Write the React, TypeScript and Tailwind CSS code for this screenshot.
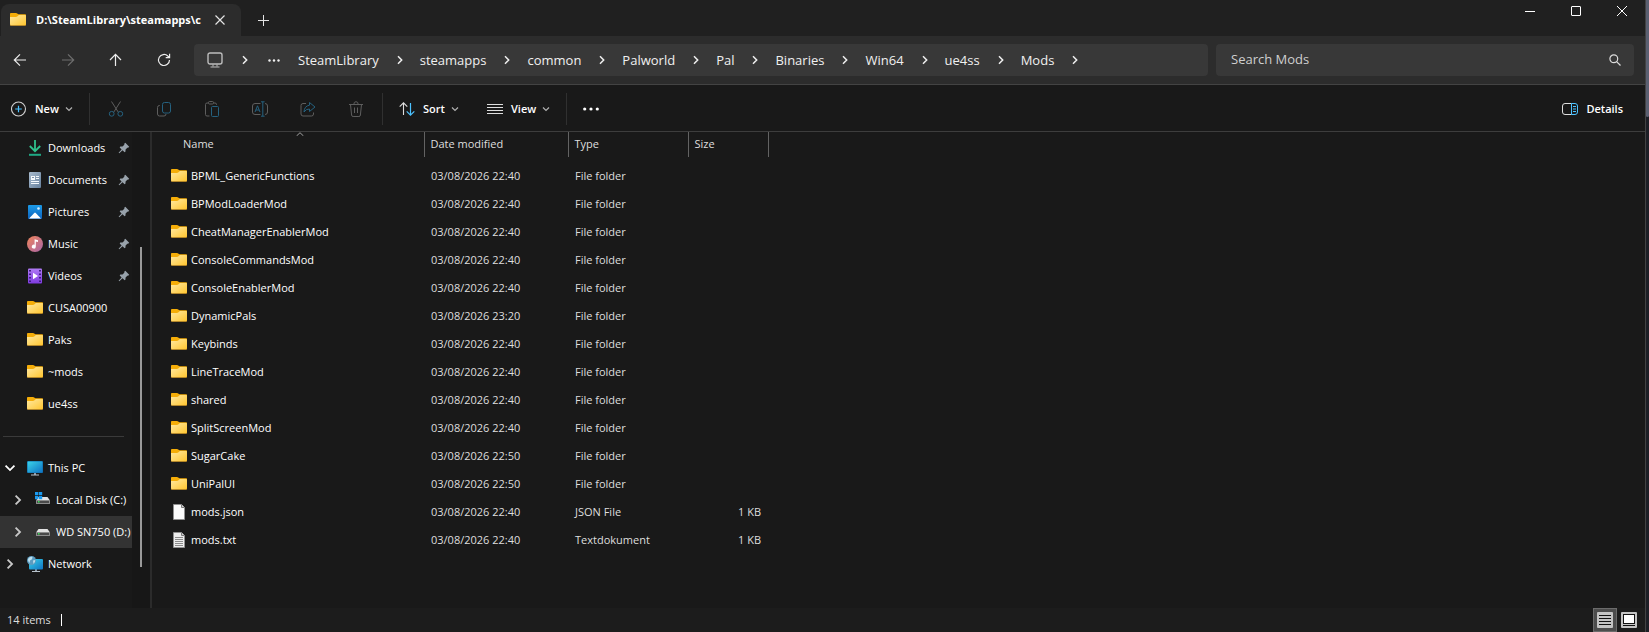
import React from 'react'

type IconProps = { className?: string }

type FileKind = 'folder' | 'json' | 'txt'

interface FileRow {
  name: string
  modified: string
  type: string
  size?: string
  kind: FileKind
}

const crumbs = ['SteamLibrary', 'steamapps', 'common', 'Palworld', 'Pal', 'Binaries', 'Win64', 'ue4ss', 'Mods']

const folder = (name: string, time = '22:40'): FileRow => ({
  name,
  modified: `03/08/2026 ${time}`,
  type: 'File folder',
  kind: 'folder'
})

const files: FileRow[] = [
  folder('BPML_GenericFunctions'),
  folder('BPModLoaderMod'),
  folder('CheatManagerEnablerMod'),
  folder('ConsoleCommandsMod'),
  folder('ConsoleEnablerMod'),
  folder('DynamicPals', '23:20'),
  folder('Keybinds'),
  folder('LineTraceMod'),
  folder('shared'),
  folder('SplitScreenMod'),
  folder('SugarCake', '22:50'),
  folder('UniPalUI', '22:50'),
  { name: 'mods.json', modified: '03/08/2026 22:40', type: 'JSON File', size: '1 KB', kind: 'json' },
  { name: 'mods.txt', modified: '03/08/2026 22:40', type: 'Textdokument', size: '1 KB', kind: 'txt' }
]

const FolderIcon: React.FC = () => (
  <svg className="h-4 w-4 shrink-0" viewBox="0 0 16 16" aria-hidden="true">
    <path d="M0 2C0 1.300.4.900 1 .900h5c.5 0 .9.200 1.200.500L8.400 2.200H15c.6 0 1 .4 1 1V8H0z" fill="#f5ad08" />
    <path d="M0 5h6c.5 0 .9-.1 1.200-.4l1.200-1.200c.2-.3.5-.4.8-.4H15c.6 0 1 .4 1 1v8.600c0 .6-.4 1-1 1H1c-.6 0-1-.4-1-1z" fill="url(#folderFront)" />
    <path d="M0 12.300c0 .7.4 1.300 1 1.300h14c.6 0 1-.6 1-1.300-.1.400-.5.600-1 .600H1c-.5 0-.9-.2-1-.6z" fill="#dc9a20" />
  </svg>
)

const DownloadsIcon: React.FC = () => (
  <svg className="h-4 w-4 shrink-0" viewBox="0 0 16 16" fill="none" aria-hidden="true">
    <path d="M8 0v11M2.800 6 8 11.200 13.200 6" stroke="#2fc08c" strokeWidth="1.800" />
    <path d="M2 14.800h12" stroke="#1fa884" strokeWidth="2" />
  </svg>
)

const DocumentsIcon: React.FC = () => (
  <svg className="h-4 w-4 shrink-0" viewBox="0 0 16 16" aria-hidden="true">
    <rect x="2" y="0" width="12" height="16" rx="1" fill="url(#docFill)" />
    <path d="M4 4h4v4H4zM9 4h3v1H9zM9 6h3v1H9zM4 9h8v1H4zM4 11h8v1H4z" fill="#f4f8fc" />
    <path d="M5 5h2v1H5z" fill="#7f93aa" />
  </svg>
)

const PicturesIcon: React.FC = () => (
  <svg className="h-4 w-4 shrink-0" viewBox="0 0 16 16" aria-hidden="true">
    <rect x="1" y="1" width="14" height="14" rx="1" fill="url(#picFill)" />
    <path d="M2 14.500 7.300 8.900q.7-.7 1.400 0L14 14.500z" fill="#fff" />
    <circle cx="11.500" cy="4.500" r="1.300" fill="#d7f0ff" />
  </svg>
)

const MusicIcon: React.FC = () => (
  <svg className="h-4 w-4 shrink-0" viewBox="0 0 16 16" aria-hidden="true">
    <circle cx="8" cy="8" r="8" fill="url(#musicFill)" />
    <path d="M7.600 3.200 11 4.200v1.900L8.800 5.500v5.200a2 2 0 1 1-1.200-1.900z" fill="#fff" />
  </svg>
)

const VideosIcon: React.FC = () => (
  <svg className="h-4 w-4 shrink-0" viewBox="0 0 16 16" aria-hidden="true">
    <rect x="1" y="0.500" width="14" height="15" rx="1" fill="url(#videoFill)" />
    <path d="M2 2h2v1.600H2zM2 5.400h2V7H2zM2 9h2v1.600H2zM2 12.400h2V14H2zM12 2h2v1.600h-2zM12 5.400h2V7h-2zM12 9h2v1.600h-2zM12 12.400h2V14h-2z" fill="#3f1f80" />
    <path d="M6 4.800v6.400L11 8z" fill="#fff" />
  </svg>
)

const PcIcon: React.FC = () => (
  <svg className="h-4 w-4 shrink-0" viewBox="0 0 16 16" aria-hidden="true">
    <path d="M7 12h2v3H7z" fill="#8b98a5" />
    <rect x="0" y="1" width="16" height="12" rx="1" fill="#0f6cab" />
    <rect x="0.600" y="1.600" width="14.800" height="10.800" rx="0.500" fill="url(#screenFill)" />
    <path d="M4 14.500h8v1H4z" fill="#b8c3cc" />
  </svg>
)

const NetworkIcon: React.FC = () => (
  <svg className="h-4 w-4 shrink-0" viewBox="0 0 16 16" aria-hidden="true">
    <path d="M8 12h2v3H8z" fill="#8b98a5" />
    <rect x="2" y="3" width="14" height="10.500" rx="1" fill="url(#screenFill)" />
    <path d="M5 15h8v1H5z" fill="#b8c3cc" />
    <circle cx="4.500" cy="4.500" r="4.500" fill="#5d9cc0" />
    <path d="M1 3Q3 .2 5.500 1L5 3.200 3 4.500 2.500 7Q.7 5.500 1 3zM6 4.500l2.300-.5Q8.300 6.500 6.500 8z" fill="#bfe0ee" />
  </svg>
)

const DriveShape: React.FC = () => (
  <>
    <path d="M3.500 7h9L15 10.500H1z" fill="#e3e3e3" />
    <rect x="1" y="10" width="14" height="4" rx="0.600" fill="#8d8d8d" />
    <rect x="2" y="11" width="12" height="2" fill="#4a4a4a" />
    <rect x="3" y="11" width="1.500" height="1.500" fill="#39e05a" />
  </>
)

const LocalDiskIcon: React.FC = () => (
  <svg className="h-4 w-4 shrink-0" viewBox="0 0 16 16" aria-hidden="true">
    <g transform="translate(0 -2)">
      <DriveShape />
    </g>
    <path d="M0 0h3.300v3.300H0zM3.900 0h3.300v3.300H3.900zM0 3.900h3.300v3.300H0zM3.900 3.900h3.300v3.300H3.900z" fill="#1a9af0" />
  </svg>
)

const DriveIcon: React.FC = () => (
  <svg className="h-4 w-4 shrink-0" viewBox="0 0 16 16" aria-hidden="true">
    <g transform="translate(0 -2)">
      <DriveShape />
    </g>
  </svg>
)

const FileIcon: React.FC<{ lined?: boolean }> = ({ lined }) => (
  <svg className="h-4 w-4 shrink-0" viewBox="0 0 16 16" aria-hidden="true">
    <path d="M2.500.5h8l3 3v12h-11z" fill={lined ? '#ececec' : '#fafafa'} stroke="#8f8f8f" />
    <path d="M10.500.5v3h3" fill="#cfcfcf" stroke="#7c7c7c" />
    {lined && <path d="M4 5.500h8M4 7.500h8M4 9.500h8M4 11.500h8M4 13.500h8" stroke="#8a8a8a" />}
  </svg>
)

const PinIcon: React.FC = () => (
  <svg className="h-3 w-3 shrink-0" viewBox="0 0 12 12" aria-hidden="true">
    <path d="M7.300.8 11.200 4.700 10.500 5.600 9.300 5.700 7.600 7.600 7.400 9.800 6.600 10.300 4.500 8.200 1.300 11.200.6 10.700 3.600 7.400 1.700 5.400 2.300 4.600 4.500 4.400 6.300 2.700 6.400 1.400z" fill="#98a2ab" />
  </svg>
)

const Chevron: React.FC<IconProps> = ({ className = '' }) => (
  <svg className={`shrink-0 ${className}`} viewBox="0 0 10 10" fill="none" stroke="currentColor" strokeWidth="1.500" aria-hidden="true">
    <path d="M3 1.300 6.700 5 3 8.700" />
  </svg>
)

const DownChevron: React.FC = () => (
  <svg className="h-2 w-2 shrink-0 text-[#b0b0b0]" viewBox="0 0 8 8" fill="none" stroke="currentColor" strokeWidth="1.200" aria-hidden="true">
    <path d="M1 2.500l3 3 3-3" />
  </svg>
)

// stroke icon on a 16px grid
const Glyph: React.FC<{ children: React.ReactNode }> = ({ children }) => (
  <svg className="h-4 w-4 shrink-0" viewBox="0 0 16 16" fill="none" stroke="currentColor" aria-hidden="true">
    {children}
  </svg>
)

const Gradients: React.FC = () => (
  <svg className="absolute h-0 w-0" aria-hidden="true">
    <defs>
      <linearGradient id="folderFront" x1="0" y1="0" x2="1" y2="1">
        <stop offset="0" stopColor="#ffe9a2" />
        <stop offset="1" stopColor="#ffc52e" />
      </linearGradient>
      <linearGradient id="docFill" x1="0" y1="0" x2="1" y2="1">
        <stop offset="0" stopColor="#a9bccf" />
        <stop offset="1" stopColor="#66809c" />
      </linearGradient>
      <linearGradient id="picFill" x1="0" y1="0" x2="0" y2="1">
        <stop offset="0" stopColor="#1c9be8" />
        <stop offset="1" stopColor="#0c62bd" />
      </linearGradient>
      <linearGradient id="musicFill" x1="0" y1="0" x2="1" y2="1">
        <stop offset="0" stopColor="#f0855a" />
        <stop offset="1" stopColor="#a865a8" />
      </linearGradient>
      <linearGradient id="videoFill" x1="0" y1="0" x2="0" y2="1">
        <stop offset="0" stopColor="#b07af5" />
        <stop offset="1" stopColor="#7f3be0" />
      </linearGradient>
      <linearGradient id="screenFill" x1="0" y1="0" x2="1" y2="1">
        <stop offset="0" stopColor="#3ad3e8" />
        <stop offset="1" stopColor="#0f73c4" />
      </linearGradient>
    </defs>
  </svg>
)

const pinned = [
  { label: 'Downloads', icon: <DownloadsIcon />, pin: true },
  { label: 'Documents', icon: <DocumentsIcon />, pin: true },
  { label: 'Pictures', icon: <PicturesIcon />, pin: true },
  { label: 'Music', icon: <MusicIcon />, pin: true },
  { label: 'Videos', icon: <VideosIcon />, pin: true },
  { label: 'CUSA00900', icon: <FolderIcon />, pin: false },
  { label: 'Paks', icon: <FolderIcon />, pin: false },
  { label: '~mods', icon: <FolderIcon />, pin: false },
  { label: 'ue4ss', icon: <FolderIcon />, pin: false }
]

const drives = [
  { label: 'Local Disk (C:)', icon: <LocalDiskIcon />, selected: false },
  { label: 'WD SN750 (D:)', icon: <DriveIcon />, selected: true }
]

const TitleBar: React.FC = () => (
  <header className="flex h-9 items-start bg-[#202020]">
    <div className="ml-px mt-1 flex h-8 w-60 items-center rounded-t-lg bg-[#2c2c2c] pl-[9px] pr-4">
      <FolderIcon />
      <span className="ml-[10px] flex-1 overflow-hidden whitespace-nowrap text-[11px] font-bold text-white">
        D:\SteamLibrary\steamapps\c
      </span>
      <button type="button" className="ml-3 text-[#e4e4e4]" aria-label="Close tab">
        <svg className="h-[10px] w-[10px]" viewBox="0 0 10 10" fill="none" stroke="currentColor" strokeWidth="1.200">
          <path d="M.5.500l9 9M9.500.500l-9 9" />
        </svg>
      </button>
    </div>
    <button type="button" className="ml-4 mt-1 flex h-8 w-[13px] items-center justify-center text-[#e4e4e4]" aria-label="New tab">
      <svg className="h-[11px] w-[11px] shrink-0" viewBox="0 0 11 11" fill="none" stroke="currentColor">
        <path d="M5.500 0v11M0 5.500h11" />
      </svg>
    </button>
    <div className="ml-auto flex text-white">
      <button type="button" className="flex h-[22px] w-[46px] items-center justify-center" aria-label="Minimize">
        <svg className="h-[10px] w-[10px]" viewBox="0 0 10 10" stroke="currentColor">
          <path d="M0 5.500h10" />
        </svg>
      </button>
      <button type="button" className="flex h-[22px] w-[46px] items-center justify-center" aria-label="Maximize">
        <svg className="h-[10px] w-[10px]" viewBox="0 0 10 10" fill="none" stroke="currentColor">
          <rect x="0.500" y="0.500" width="9" height="9" rx="0.500" />
        </svg>
      </button>
      <button type="button" className="flex h-[22px] w-[46px] items-center justify-center" aria-label="Close">
        <svg className="h-[10px] w-[10px]" viewBox="0 0 10 10" fill="none" stroke="currentColor">
          <path d="M0 0l10 10M10 0L0 10" />
        </svg>
      </button>
    </div>
  </header>
)

const NavBar: React.FC = () => (
  <div className="flex items-center gap-2 border-b border-[#434343] bg-[#2c2c2c] py-2 pr-[11px]">
    <nav className="flex items-center gap-8 pl-3 pr-[14px] text-[#ededed]" aria-label="History">
      <button type="button" aria-label="Back">
        <Glyph><path d="M14 8H2.500M8 2.300 2.300 8 8 13.700" strokeWidth="1.200" /></Glyph>
      </button>
      <button type="button" className="text-[#6e6e6e]" aria-label="Forward" disabled>
        <Glyph><path d="M2 8h11.500M8 2.300 13.700 8 8 13.700" strokeWidth="1.200" /></Glyph>
      </button>
      <button type="button" aria-label="Up">
        <Glyph><path d="M7.500 14V2.500M2 8 7.500 2.300 13 8" strokeWidth="1.200" /></Glyph>
      </button>
      <button type="button" aria-label="Refresh">
        <Glyph><path d="M13.500 8A5.500 5.500 0 1 1 11.800 4L13.500 5.500M13.600 1.800v3.900H9.700" strokeWidth="1.200" /></Glyph>
      </button>
    </nav>
    <div className="flex h-8 flex-1 items-center rounded bg-[#383838] pl-[13px] text-[#f0f0f0]">
      <button type="button" aria-label="This PC">
        <Glyph>
          <rect x="1" y="1" width="14" height="11" rx="2" stroke="#bdbdbd" strokeWidth="1.400" />
          <path d="M6 12.500v2M10 12.500v2M3.500 15h9" stroke="#bdbdbd" />
        </Glyph>
      </button>
      <Chevron className="ml-[17px] h-[10px] w-[10px]" />
      <button type="button" className="ml-[18px] mr-[18px]" aria-label="More locations">
        <svg className="h-[3px] w-3" viewBox="0 0 12 3" fill="currentColor">
          <circle cx="1.500" cy="1.500" r="1.200" />
          <circle cx="6" cy="1.500" r="1.200" />
          <circle cx="10.500" cy="1.500" r="1.200" />
        </svg>
      </button>
      <ol className="flex items-center">
        {crumbs.map((crumb) => (
          <li key={crumb} className="flex items-center">
            <a href="#" className="text-[13px] leading-5">{crumb}</a>
            <Chevron className="ml-4 mr-[15px] h-[10px] w-[10px]" />
          </li>
        ))}
      </ol>
    </div>
    <label className="flex h-8 w-[418px] items-center rounded bg-[#383838] pl-[15px] pr-[13px] text-[#dcdcdc]">
      <input
        type="search"
        aria-label="Search Mods"
        placeholder="Search Mods"
        className="min-w-0 flex-1 bg-transparent text-[13px] outline-none placeholder:text-[#cfcfcf]"
      />
      <svg className="h-3 w-3 shrink-0" viewBox="0 0 12 12" fill="none" stroke="currentColor" strokeWidth="1.200" aria-hidden="true">
        <circle cx="4.800" cy="4.800" r="3.900" />
        <path d="M7.600 7.600 11.500 11.500" />
      </svg>
    </label>
  </div>
)

const Divider: React.FC = () => <div className="h-8 w-px bg-[#303030]" />

const Toolbar: React.FC = () => (
  <div className="flex h-[47px] items-center border-b border-[#3d3d3d] bg-[#191919] pt-[2px] text-[11px] font-semibold text-white" role="toolbar">
    <button type="button" className="ml-[11px] mr-4 flex w-[62px] items-center">
      <Glyph>
        <circle cx="7.500" cy="8" r="7" stroke="#d0d0d0" strokeWidth="1.100" />
        <path d="M7.500 4.700v6.600M4.200 8h6.600" stroke="#4cc2ff" strokeWidth="1.200" />
      </Glyph>
      <span className="ml-2 flex-1 text-left">New</span>
      <DownChevron />
    </button>
    <Divider />
    <div className="flex gap-8 pl-[18px] pr-[18px] text-[#5e5e5e]">
      <button type="button" aria-label="Cut" disabled>
        <Glyph>
          <path d="M3.500.5l6.800 10.700M12.500.5 5.700 11.200" />
          <circle cx="3.700" cy="12.800" r="2.400" stroke="#25617f" />
          <circle cx="12.300" cy="12.800" r="2.400" stroke="#25617f" />
        </Glyph>
      </button>
      <button type="button" aria-label="Copy" disabled>
        <Glyph>
          <path d="M4 4.500H3.500a2 2 0 0 0-2 2V13a2 2 0 0 0 2 2h4.500a2 2 0 0 0 2-2" />
          <rect x="6.500" y="1.500" width="8" height="10.500" rx="2" stroke="#25617f" />
        </Glyph>
      </button>
      <button type="button" aria-label="Paste" disabled>
        <Glyph>
          <path d="M5.500 15H3a1.500 1.500 0 0 1-1.500-1.500V3.500A1.500 1.500 0 0 1 3 2h1.500M9.500 2H11a1.500 1.500 0 0 1 1.500 1.500V4" />
          <rect x="4.500" y="0.500" width="5" height="2.500" rx="1" />
          <rect x="7.500" y="5.500" width="7" height="10" rx="1" stroke="#25617f" />
        </Glyph>
      </button>
      <button type="button" aria-label="Rename" disabled>
        <Glyph>
          <path d="M8.500 13.500H3a2.500 2.500 0 0 1-2.500-2.500V5A2.500 2.500 0 0 1 3 2.500h5.500M13 2.500A2.500 2.500 0 0 1 15.500 5v6a2.500 2.500 0 0 1-2.500 2.500" />
          <path d="M3 11 5.500 4.800 8 11M3.800 9h3.400M10.800.8v14.400M9 .8h3.600M9 15.200h3.600" stroke="#25617f" />
        </Glyph>
      </button>
      <button type="button" aria-label="Share" disabled>
        <Glyph>
          <path d="M6 2.500H3a2 2 0 0 0-2 2V13a2 2 0 0 0 2 2h8.500a2 2 0 0 0 2-2v-1.500" />
          <path d="M9.500 1.500 15 6l-5.500 4.500V8Q6 7.800 4 11q.3-6 5.500-6.800z" stroke="#25617f" strokeLinejoin="round" />
        </Glyph>
      </button>
      <button type="button" aria-label="Delete" disabled>
        <Glyph>
          <path d="M1 3.500h14M2.500 3.500 3.600 14a1.500 1.500 0 0 0 1.500 1.500h5.800a1.500 1.500 0 0 0 1.500-1.500L13.500 3.500M5.800 3.300Q5.900.7 8 .7t2.200 2.600M6.500 6.500v5.500M9.500 6.500v5.500" />
        </Glyph>
      </button>
    </div>
    <Divider />
    <button type="button" className="ml-4 flex w-[60px] items-center">
      <Glyph>
        <path d="M4.500 14V2M.7 5.700 4.500 1.900 8.300 5.700" stroke="#dedede" strokeWidth="1.100" />
        <path d="M11.500 2v12M7.700 10.300l3.800 3.800 3.800-3.800" stroke="#4cc2ff" strokeWidth="1.200" />
      </Glyph>
      <span className="ml-2 flex-1 text-left">Sort</span>
      <DownChevron />
    </button>
    <button type="button" className="ml-7 mr-4 flex w-[63px] items-center">
      <Glyph><path d="M0 3.500h16M0 6.500h16M0 9.500h16M0 12.500h16" stroke="#dedede" /></Glyph>
      <span className="ml-2 flex-1 text-left">View</span>
      <DownChevron />
    </button>
    <Divider />
    <button type="button" className="ml-4" aria-label="See more">
      <svg className="h-4 w-4" viewBox="0 0 16 16" fill="currentColor">
        <circle cx="1.700" cy="8" r="1.600" />
        <circle cx="8" cy="8" r="1.600" />
        <circle cx="14.300" cy="8" r="1.600" />
      </svg>
    </button>
    <button type="button" className="ml-auto mr-[22px] flex items-center gap-2">
      <Glyph>
        <path d="M9.500 2.500H3A2.500 2.500 0 0 0 .5 5v6A2.500 2.500 0 0 0 3 13.500h6.500" stroke="#dedede" />
        <path d="M9.500 2.500H13A2.500 2.500 0 0 1 15.500 5v6a2.500 2.500 0 0 1-2.500 2.500H9.500zM11 5.500h3M11 8h3M11 10.500h3" stroke="#4cc2ff" />
      </Glyph>
      Details
    </button>
  </div>
)

const Sidebar: React.FC = () => (
  <aside className="flex w-[152px] shrink-0 border-r-2 border-[#2b2b2b] text-[11px] text-white">
    <nav className="w-[132px]" aria-label="Folders">
      {pinned.map((item) => (
        <a key={item.label} href="#" className="flex h-8 items-center pl-[27px] pr-[2px]">
          {item.icon}
          <span className="ml-[5px] flex-1 whitespace-nowrap">{item.label}</span>
          {item.pin && <PinIcon />}
        </a>
      ))}
      <div className="flex h-8 items-center pl-[3px] pr-2">
        <hr className="w-full border-[#3a3a3a]" />
      </div>
      <a href="#" className="flex h-8 items-center pl-1">
        <Chevron className="h-3 w-3 rotate-90" />
        <span className="ml-[11px]"><PcIcon /></span>
        <span className="ml-[5px]">This PC</span>
      </a>
      {drives.map((drive) => (
        <a
          key={drive.label}
          href="#"
          className={`flex h-8 items-center overflow-hidden pl-3 ${drive.selected ? 'bg-[#333333]' : ''}`}
        >
          <Chevron className="h-3 w-3 text-[#c8c8c8]" />
          <span className="ml-[11px]">{drive.icon}</span>
          <span className="ml-[5px] whitespace-nowrap">{drive.label}</span>
        </a>
      ))}
      <a href="#" className="flex h-8 items-center pl-1">
        <Chevron className="h-3 w-3 text-[#c8c8c8]" />
        <span className="ml-[11px]"><NetworkIcon /></span>
        <span className="ml-[5px]">Network</span>
      </a>
    </nav>
    <div className="flex-1 bg-[#171717] pl-2 pt-[115px]">
      <div className="h-80 w-[2px] bg-[#9a9a9a]" />
    </div>
  </aside>
)

const FileTable: React.FC = () => (
  <main className="min-w-0 flex-1">
    <table className="table-fixed border-collapse text-[11px] text-[#dedede]">
      <colgroup>
        <col className="w-[272px]" />
        <col className="w-36" />
        <col className="w-[120px]" />
        <col className="w-20" />
      </colgroup>
      <thead>
        <tr className="h-[25px] text-left">
          <th scope="col" aria-sort="ascending" className="relative border-r border-[#636363] p-0 pl-[31px] font-normal">
            <button type="button">Name</button>
            <svg className="absolute left-36 top-0 h-1 w-2" viewBox="0 0 8 4" fill="none" stroke="#a0a0a0" aria-hidden="true">
              <path d="M.5 4 4 .7 7.500 4" />
            </svg>
          </th>
          <th scope="col" className="border-r border-[#636363] p-0 pl-[6px] font-normal">
            <button type="button">Date modified</button>
          </th>
          <th scope="col" className="border-r border-[#636363] p-0 pl-[6px] font-normal">
            <button type="button">Type</button>
          </th>
          <th scope="col" className="border-r border-[#636363] p-0 pl-[6px] font-normal">
            <button type="button">Size</button>
          </th>
        </tr>
      </thead>
      <tbody>
        <tr className="h-[5px]" aria-hidden="true" />
        {files.map((file) => (
          <tr key={file.name} className="h-7">
            <td className="p-0 pl-[19px] text-white">
              <span className="flex items-center gap-1">
                {file.kind === 'folder' ? <FolderIcon /> : <FileIcon lined={file.kind === 'txt'} />}
                {file.name}
              </span>
            </td>
            <td className="p-0 pl-[7px]">{file.modified}</td>
            <td className="p-0 pl-[7px]">{file.type}</td>
            <td className="p-0 pr-[7px] text-right">{file.size}</td>
          </tr>
        ))}
      </tbody>
    </table>
  </main>
)

const StatusBar: React.FC = () => (
  <footer className="flex h-6 items-center bg-[#1c1c1c] pl-[7px] text-[11px] text-[#dedede]">
    <span>14 items</span>
    <span className="ml-[10px] h-3 w-px bg-white" />
    <button
      type="button"
      className="ml-auto flex h-6 w-6 items-center justify-center border border-[#6b6b6b] bg-[#4d4d4d]"
      aria-label="Details view"
      aria-pressed="true"
    >
      <svg className="h-4 w-4 shrink-0" viewBox="0 0 16 16">
        <rect width="16" height="16" rx="1" fill="#c4c4c4" />
        <path d="M2 3.500h12M2 6.500h12M2 9.500h12M2 12.500h12" stroke="#111" />
      </svg>
    </button>
    <button type="button" className="ml-1 mr-2" aria-label="Large icons view">
      <svg className="h-4 w-4" viewBox="0 0 16 16">
        <rect width="16" height="16" rx="1" fill="#c4c4c4" />
        <rect x="2.500" y="2.500" width="11" height="9" fill="#fff" stroke="#111" />
        <path d="M2 13.500h12" stroke="#111" />
      </svg>
    </button>
  </footer>
)

const App: React.FC = () => (
  <div className="flex min-h-screen bg-[#1d1f26] font-['Open_Sans','Noto_Sans',sans-serif]">
    <Gradients />
    <div className="flex min-w-0 flex-1 flex-col border-r border-[#434343] bg-[#191919]">
      <TitleBar />
      <NavBar />
      <Toolbar />
      <div className="flex flex-1">
        <Sidebar />
        <FileTable />
      </div>
      <StatusBar />
    </div>
    <div className="w-[3px]">
      <div className="h-[117px] rounded-b bg-[#5b6072]" />
    </div>
  </div>
)

export default App
